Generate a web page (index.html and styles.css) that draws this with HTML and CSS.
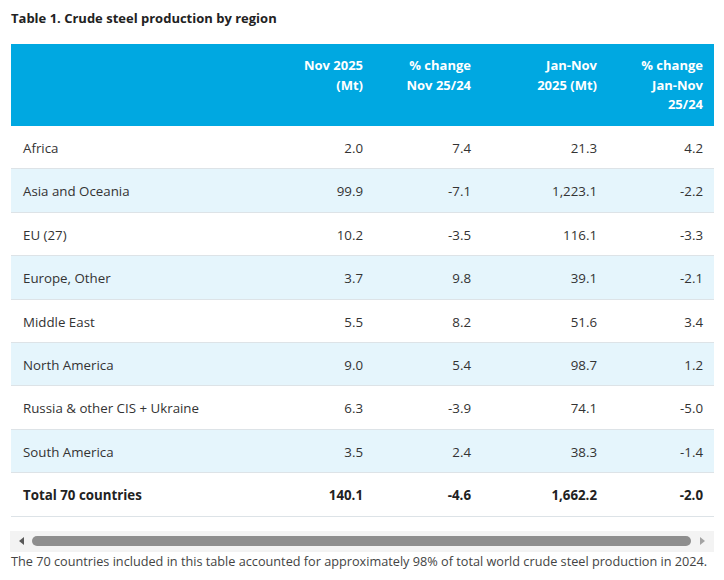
FILE: index.html
```html
<!DOCTYPE html>
<html>
<head>
<meta charset="utf-8">
<link rel="stylesheet" href="styles.css">
</head>
<body>
<div class="wrap">
  <h3 class="title">Table 1. Crude steel production by region</h3>
  <table class="data">
    <colgroup>
      <col class="c1"><col class="c2"><col class="c3"><col class="c4"><col class="c5">
    </colgroup>
    <thead>
      <tr>
        <th></th>
        <th>Nov 2025<br>(Mt)</th>
        <th>% change<br>Nov 25/24</th>
        <th>Jan-Nov<br>2025 (Mt)</th>
        <th>% change<br>Jan-Nov<br>25/24</th>
      </tr>
    </thead>
    <tbody>
      <tr><td>Africa</td><td>2.0</td><td>7.4</td><td>21.3</td><td>4.2</td></tr>
      <tr class="alt"><td>Asia and Oceania</td><td>99.9</td><td>-7.1</td><td>1,223.1</td><td>-2.2</td></tr>
      <tr><td>EU (27)</td><td>10.2</td><td>-3.5</td><td>116.1</td><td>-3.3</td></tr>
      <tr class="alt"><td>Europe, Other</td><td>3.7</td><td>9.8</td><td>39.1</td><td>-2.1</td></tr>
      <tr><td>Middle East</td><td>5.5</td><td>8.2</td><td>51.6</td><td>3.4</td></tr>
      <tr class="alt"><td>North America</td><td>9.0</td><td>5.4</td><td>98.7</td><td>1.2</td></tr>
      <tr><td>Russia &amp; other CIS + Ukraine</td><td>6.3</td><td>-3.9</td><td>74.1</td><td>-5.0</td></tr>
      <tr class="alt"><td>South America</td><td>3.5</td><td>2.4</td><td>38.3</td><td>-1.4</td></tr>
      <tr class="total"><td>Total 70 countries</td><td>140.1</td><td>-4.6</td><td>1,662.2</td><td>-2.0</td></tr>
    </tbody>
  </table>
  <div class="scrollbar">
    <span class="arrow left"></span>
    <span class="thumb"></span>
    <span class="arrow right"></span>
  </div>
  <p class="note">The 70 countries included in this table accounted for approximately 98% of total world crude steel production in 2024.</p>
</div>
</body>
</html>
```

FILE: styles.css
```css
html, body {
  margin: 0;
  padding: 0;
  background: #ffffff;
}
body {
  font-family: "Open Sans", "Liberation Sans", sans-serif;
  color: #333333;
}
.wrap {
  padding: 9px 10px 0 11px;
}
.title {
  margin: 0;
  font-size: 13px;
  line-height: 18px;
  font-weight: 700;
  color: #222222;
}
.data {
  margin-top: 17px;
  width: 703px;
  border-collapse: collapse;
  table-layout: fixed;
  font-size: 13px;
}
.c2 { width: 117px; }
.c3 { width: 108px; }
.c4 { width: 126px; }
.c5 { width: 106px; }
.data th {
  background: #00a8e1;
  color: #ffffff;
  font-weight: 700;
  text-align: right;
  vertical-align: top;
  line-height: 19.5px;
  padding: 12px 11px 11px 11px;
  height: 59px;
}
.data td {
  text-align: right;
  font-size: 13.3px;
  line-height: 19.4px;
  padding: 13px 11px 10px 11px;
  border-bottom: 1px solid #dde3e7;
}
.data td:first-child {
  text-align: left;
  padding-left: 12px;
}
.data tr.alt td {
  background: #e5f5fc;
}
.data tr.total td {
  font-weight: 700;
  color: #222222;
}
.scrollbar {
  margin-top: 14px;
  height: 21px;
  background: #f3f3f3;
  display: flex;
  align-items: center;
  width: 704px;
  margin-left: -1px;
}
.arrow {
  width: 0;
  height: 0;
  border-top: 4px solid transparent;
  border-bottom: 4px solid transparent;
}
.arrow.left {
  border-right: 5px solid #595959;
  margin-left: 9px;
}
.arrow.right {
  border-left: 5px solid #a3a3a3;
  margin-right: 9px;
}
.thumb {
  flex: 1;
  height: 10px;
  background: #8e8e8e;
  border-radius: 5px;
  margin: 0 9px 0 8px;
}
.note {
  margin: 0;
  font-size: 12.7px;
  line-height: 18px;
  color: #444444;
  white-space: nowrap;
}
```
